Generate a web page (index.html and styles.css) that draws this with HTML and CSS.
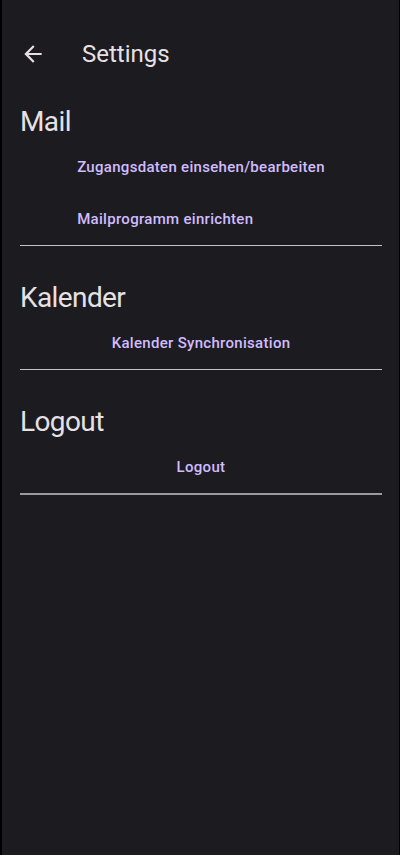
FILE: index.html
```html
<html>
    <head>
        <link rel="stylesheet" href="styles.css">
    </head>
    <body>
        <div class="screen">
            <div class="appbar">
                <button class="back" aria-label="Back">
                    <svg width="24" height="24" viewBox="0 0 24 24">
                        <path d="M20 11H7.83l5.59-5.59L12 4l-8 8 8 8 1.41-1.41L7.83 13H20v-2z" fill="#e6e1e5"/>
                    </svg>
                </button>
                <span class="title">Settings</span>
            </div>

            <div class="section">
                <h2>Mail</h2>
                <div class="links">
                    <a class="link" href="#">Zugangsdaten einsehen/bearbeiten</a>
                    <a class="link" href="#">Mailprogramm einrichten</a>
                </div>
            </div>
            <hr class="divider">

            <div class="section">
                <h2>Kalender</h2>
                <div class="links">
                    <a class="link" href="#">Kalender Synchronisation</a>
                </div>
            </div>
            <hr class="divider">

            <div class="section">
                <h2>Logout</h2>
                <div class="links">
                    <a class="link" href="#">Logout</a>
                </div>
            </div>
            <hr class="divider thick">
        </div>
    </body>
</html>
```
FILE: styles.css
```css
body {
    margin: 0;
    background: #000;
    font-family: Roboto, "Noto Sans", sans-serif;
}

.screen {
    margin: 0 1px 0 2px;
    min-height: 855px;
    background: #1c1b1f;
    padding: 22px 17px 0 18px;
    box-sizing: border-box;
}

.appbar {
    height: 64px;
    display: flex;
    align-items: center;
}

.back {
    width: 26px;
    height: 26px;
    padding: 0;
    margin-left: 0;
    border: none;
    background: none;
    display: flex;
    align-items: center;
    justify-content: center;
}

.back svg {
    width: 26px;
    height: 26px;
}

.title {
    margin-left: 36px;
    font-size: 24px;
    color: #e6e1e5;
}

.section {
    padding-top: 18px;
}

.divider + .section {
    padding-top: 34px;
}

.section h2 {
    margin: 0;
    font-size: 28px;
    font-weight: 400;
    line-height: 36px;
    letter-spacing: -0.6px;
    color: #e6e1e5;
}

.links {
    display: flex;
    flex-direction: column;
    align-items: flex-start;
    width: max-content;
    margin: 7px auto 0;
    gap: 12px;
}

.link {
    display: block;
    padding: 10px 12px;
    font-size: 15px;
    font-weight: 500;
    line-height: 20px;
    letter-spacing: 0.3px;
    color: #d0bcff;
    text-decoration: none;
}

.divider {
    margin: 6px 0 0;
    border: none;
    height: 1px;
    background: #c4c0c6;
}

.divider.thick {
    height: 2px;
    background: #9b9a9c;
}
```
